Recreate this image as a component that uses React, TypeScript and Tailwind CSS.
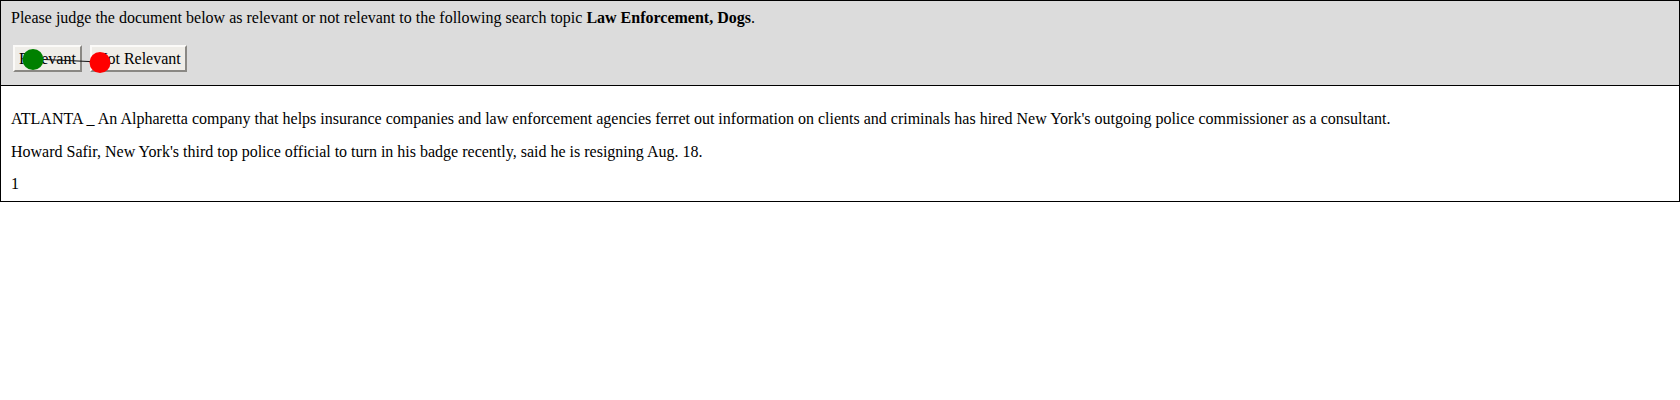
const paragraphs = [
  "ATLANTA _ An Alpharetta company that helps insurance companies and law enforcement agencies ferret out information on clients and criminals has hired New York's outgoing police commissioner as a consultant.",
  "Howard Safir, New York's third top police official to turn in his badge recently, said he is resigning Aug. 18.",
  "1",
];

const App = () => {
  return (
    <div className="relative bg-white text-black text-[16px] leading-[18px] font-['Liberation_Serif',serif]">
      <div className="border border-black">
        {/* Judging bar */}
        <div className="bg-[#dcdcdc] border-b border-black px-[10px] pt-[8px] pb-[13px]">
          <p>
            Please judge the document below as relevant or not relevant to the following search topic{" "}
            <b>Law Enforcement, Dogs</b>.
          </p>
          <div className="flex gap-[8px] mt-[18px] pl-[2px]">
            <button className="h-[27px] px-[4px] bg-[#efede8] border-2 border-t-[#fbfaf8] border-l-[#fbfaf8] border-r-[#8a8884] border-b-[#8a8884]">
              Relevant
            </button>
            <button className="h-[27px] px-[4px] bg-[#efede8] border-2 border-t-[#fbfaf8] border-l-[#fbfaf8] border-r-[#8a8884] border-b-[#8a8884]">
              Not Relevant
            </button>
          </div>
        </div>

        {/* Document */}
        <div className="flex flex-col gap-[14.5px] px-[10px] pt-[24px] pb-[8px]">
          {paragraphs.map((text, i) => (
            <p key={i}>{text}</p>
          ))}
        </div>
      </div>

      {/* Gaze trail overlay */}
      <svg className="absolute left-0 top-0 pointer-events-none" width="140" height="90">
        <line x1="33" y1="59" x2="100" y2="62" stroke="#111" strokeWidth="1" />
        <circle cx="33" cy="59.5" r="10.5" fill="#008000" />
        <circle cx="100" cy="62.5" r="10.5" fill="#ff0000" />
      </svg>
    </div>
  );
};

export default App;
